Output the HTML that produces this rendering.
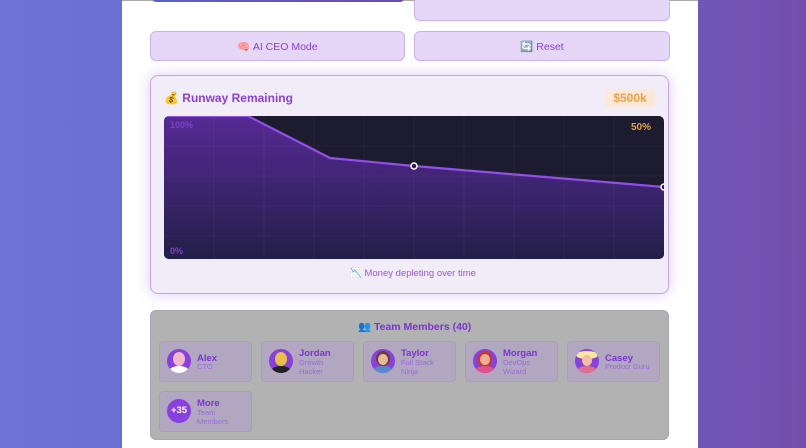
<!DOCTYPE html>
<html><head><meta charset="utf-8"><style>
*{box-sizing:border-box;margin:0;padding:0}
body{width:806px;height:448px;overflow:hidden;font-family:"Liberation Sans",sans-serif;background:linear-gradient(90deg,#6c72d6 0%,#6b70d3 14%,#7056b6 86%,#744fae 100%);position:relative}
.panel{position:absolute;left:122px;top:0;width:576px;height:448px;background:#fff;border-top:1px solid #aaa}
.topbar{position:absolute;left:152px;top:-6px;width:252px;height:8px;border-radius:4px;background:linear-gradient(90deg,#5b63c8,#6c4aa8)}
.btn{position:absolute;background:#e6d6f8;border:1px solid #c9b0ee;border-radius:6px;color:#8a3fe0;font-size:10.5px;display:flex;align-items:center;justify-content:center}
.card{position:absolute;left:150px;top:75px;width:519px;height:219px;border:1.5px solid #c3a5ef;border-radius:8px;background:#f1ecf8;box-shadow:0 0 14px rgba(160,110,230,.35)}
.title{position:absolute;left:164px;top:91px;font-size:12px;font-weight:bold;color:#8a3fe0}
.badge{position:absolute;left:605px;top:89px;width:50px;height:18px;background:#fbe8d8;border-radius:3px;color:#f0a040;font-weight:bold;font-size:12px;text-align:center;line-height:18px}
.chart{position:absolute;left:164px;top:116px;width:500px;height:143px;border-radius:5px;overflow:hidden;background:#1d1b2f}
.lbl{position:absolute;font-size:9px;font-weight:bold}
.team{position:absolute;left:150px;top:310px;width:519px;height:130px;background:#b2b2b2;border:1px solid #a9a3b8;border-radius:6px}
.m{position:absolute;width:93px;height:41px;background:#b1a7c0;border:1px solid #a99cc0;border-radius:4px}
.av{position:absolute;left:7px;top:7px;width:24px;height:24px;border-radius:50%;background:#8a3fe0;overflow:hidden}
.nm{position:absolute;left:37px;font-size:9.5px;font-weight:bold;color:#7a35d0}
.rl{position:absolute;left:37px;font-size:7.5px;color:#9a6ad8;line-height:8.5px}
</style></head><body>
<div class="panel"></div>
<div class="topbar"></div>
<div class="btn" style="left:414px;top:-4px;width:256px;height:25px"></div>
<div class="btn" style="left:150px;top:31px;width:255px;height:30px">🧠 AI CEO Mode</div>
<div class="btn" style="left:414px;top:31px;width:256px;height:30px">🔄 Reset</div>
<div class="card"></div>
<div class="title">💰 Runway Remaining</div>
<div class="badge">$500k</div>
<div class="chart">
<svg width="500" height="143" viewBox="0 0 500 143">
<defs><linearGradient id="g" x1="0" y1="0" x2="0" y2="1"><stop offset="0" stop-color="#5a2a9a"/><stop offset="1" stop-color="#231f4a"/></linearGradient></defs>
<path d="M0 0 L84 0 L166 42 L250 50 L500 71 L500 143 L0 143Z" fill="url(#g)" opacity=".95"/>
<g stroke="#ffffff" stroke-opacity=".04" stroke-width="1">
<line x1="50" y1="0" x2="50" y2="143"/><line x1="100" y1="0" x2="100" y2="143"/><line x1="150" y1="0" x2="150" y2="143"/><line x1="200" y1="0" x2="200" y2="143"/><line x1="250" y1="0" x2="250" y2="143"/><line x1="300" y1="0" x2="300" y2="143"/><line x1="350" y1="0" x2="350" y2="143"/><line x1="400" y1="0" x2="400" y2="143"/><line x1="450" y1="0" x2="450" y2="143"/>
<line x1="0" y1="30" x2="500" y2="30"/><line x1="0" y1="60" x2="500" y2="60"/><line x1="0" y1="90" x2="500" y2="90"/><line x1="0" y1="120" x2="500" y2="120"/>
</g>
<path d="M0 0 L84 0 L166 42 L250 50 L500 71" fill="none" stroke="#9050e8" stroke-width="2.2"/>
<circle cx="250" cy="50" r="3" fill="#2a1f4a" stroke="#fff" stroke-width="1.5"/>
<circle cx="500" cy="71" r="3" fill="#2a1f4a" stroke="#fff" stroke-width="1.5"/>
</svg>
<div class="lbl" style="left:6px;top:4px;color:#7a45c8">100%</div>
<div class="lbl" style="left:6px;top:130px;color:#7a45c8">0%</div>
<div class="lbl" style="right:13px;top:6px;color:#e8a040;font-size:10px">50%</div>
</div>
<div style="position:absolute;left:350px;top:268px;font-size:9.5px;color:#9a55e0">📉 Money depleting over time</div>
<div class="team"></div>
<div style="position:absolute;left:358px;top:320px;font-size:10.5px;font-weight:bold;color:#7a35d0">👥 Team Members (40)</div>
<div class="m" style="left:159px;top:341px"><div class="av" style="background:#8a3fe0"><div style="position:absolute;left:6px;top:3px;width:12px;height:14px;border-radius:50%;background:#f0b8c8"></div><div style="position:absolute;left:3px;top:17px;width:18px;height:8px;border-radius:50% 50% 0 0;background:#fff"></div></div><div class="nm" style="top:11px">Alex</div><div class="rl" style="top:21px">CTO</div></div>
<div class="m" style="left:261px;top:341px"><div class="av"><div style="position:absolute;left:6px;top:3px;width:12px;height:14px;border-radius:50%;background:#e8c048"></div><div style="position:absolute;left:3px;top:17px;width:18px;height:8px;border-radius:50% 50% 0 0;background:#222"></div></div><div class="nm" style="top:6px">Jordan</div><div class="rl" style="top:17px">Growth<br>Hacker</div></div>
<div class="m" style="left:363px;top:341px"><div class="av"><div style="position:absolute;left:5px;top:2px;width:14px;height:15px;border-radius:50%;background:#6a4030"></div><div style="position:absolute;left:7px;top:5px;width:10px;height:11px;border-radius:50%;background:#e8b898"></div><div style="position:absolute;left:3px;top:17px;width:18px;height:8px;border-radius:50% 50% 0 0;background:#5a88c8"></div></div><div class="nm" style="top:6px">Taylor</div><div class="rl" style="top:17px">Full Stack<br>Ninja</div></div>
<div class="m" style="left:465px;top:341px"><div class="av"><div style="position:absolute;left:5px;top:2px;width:14px;height:17px;border-radius:50%;background:#c83a20"></div><div style="position:absolute;left:7px;top:5px;width:10px;height:11px;border-radius:50%;background:#f0b090"></div><div style="position:absolute;left:3px;top:17px;width:18px;height:8px;border-radius:50% 50% 0 0;background:#e0508a"></div></div><div class="nm" style="top:6px">Morgan</div><div class="rl" style="top:17px">DevOps<br>Wizard</div></div>
<div class="m" style="left:567px;top:341px"><div class="av"><div style="position:absolute;left:1px;top:2px;width:22px;height:8px;border-radius:50%;background:#f8e8a0"></div><div style="position:absolute;left:7px;top:6px;width:10px;height:11px;border-radius:50%;background:#f0c0a0"></div><div style="position:absolute;left:3px;top:17px;width:18px;height:8px;border-radius:50% 50% 0 0;background:#e07090"></div></div><div class="nm" style="top:11px">Casey</div><div class="rl" style="top:21px">Product Guru</div></div>
<div class="m" style="left:159px;top:391px"><div class="av" style="color:#fff;font-size:9.5px;font-weight:bold;text-align:center;line-height:24px">+35</div><div class="nm" style="top:6px">More</div><div class="rl" style="top:17px">Team<br>Members</div></div>
</body></html>
